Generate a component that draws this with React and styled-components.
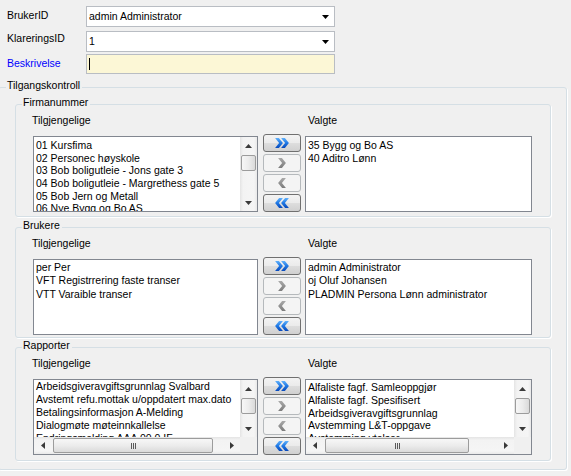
import React from 'react';
import styled, { createGlobalStyle } from 'styled-components';

const GlobalStyle = createGlobalStyle`
  html, body { margin: 0; padding: 0; }
  body {
    background: #f0f0f0;
    font-family: "Liberation Sans", Arial, sans-serif;
    font-size: 10.5px;
    color: #000;
    overflow: hidden;
  }
  * { box-sizing: border-box; }
`;

const Window = styled.div`
  width: 571px;
  height: 476px;
  padding-top: 6px;
  overflow: hidden;
  background: #f0f0f0;
`;

const FormRow = styled.div`
  display: flex;
  height: ${p => p.$h}px;
  margin-top: ${p => p.$mt}px;
`;

const FieldLabel = styled.label`
  width: 86px;
  padding: ${p => p.$pt}px 0 0 7px;
  line-height: 13px;
  color: ${p => (p.$accent ? '#0000ff' : '#000')};
`;

const Combo = styled.div`
  width: 249px;
  display: flex;
  align-items: center;
  justify-content: space-between;
  padding: 0 5px 0 2px;
  background: ${p => (p.$note ? '#fcf7d6' : '#fff')};
  border: 1px solid #b9bdc3;
  line-height: 13px;
`;

const Caret = styled.span`
  width: 1px;
  height: 12px;
  background: #000;
`;

const OuterGroup = styled.fieldset`
  margin: 5px 4px 0 -2px;
  padding: 0 15px 8px 16px;
  border: 1px solid #d5dfe5;
  border-radius: 3px;
  box-shadow: 1px 1px 0 #fff;
  min-width: 0;
`;

const GroupTitle = styled.legend`
  margin-left: ${p => p.$ml}px;
  padding: 0 2px 4px 1px;
  line-height: 13px;
`;

const InnerGroup = styled.fieldset`
  margin: ${p => p.$mt}px 0 0 0;
  padding: 1px 18px ${p => p.$pb}px 17px;
  border: 1px solid #d5dfe5;
  border-radius: 3px;
  box-shadow: 1px 1px 0 #fff;
  min-width: 0;
`;

const TransferGrid = styled.div`
  display: grid;
  grid-template-columns: 225px minmax(0, 1fr) 227px;
  grid-template-rows: 13px 78px;
  row-gap: 7px;
`;

const ColumnLabel = styled.div`
  grid-column: ${p => p.$col};
  grid-row: 1;
  line-height: 13px;
  margin-left: ${p => p.$ml}px;
`;

const ListBox = styled.div`
  grid-column: ${p => p.$col};
  grid-row: 2;
  margin-top: 2px;
  border: 1px solid #828790;
  background: #fff;
  display: grid;
  grid-template-columns: minmax(0, 1fr) auto;
  grid-template-rows: minmax(0, 1fr) auto;
  overflow: hidden;
  min-height: 0;
`;

const Items = styled.div`
  grid-area: 1 / 1;
  padding: ${p => p.$pt}px 0 0 2px;
  overflow: hidden;
  min-width: 0;
  min-height: 0;
`;

const Item = styled.div`
  line-height: ${p => p.$lh}px;
  white-space: nowrap;
`;

const VScroll = styled.div`
  grid-area: 1 / 2;
  width: 17px;
  display: flex;
  flex-direction: column;
  background: linear-gradient(to right, #e4e4e4, #f3f3f3 18%, #f5f5f5 82%, #e9e9e9);
`;

const HScroll = styled.div`
  grid-area: 2 / 1;
  height: 17px;
  display: flex;
  background: linear-gradient(to bottom, #e4e4e4, #f3f3f3 18%, #f5f5f5 82%, #e9e9e9);
`;

const Corner = styled.div`
  grid-area: 2 / 2;
  background: #f0f0f0;
`;

const ScrollArrow = styled.div`
  flex: none;
  width: 17px;
  height: 17px;
  display: flex;
  align-items: center;
  justify-content: center;
`;

const Track = styled.div`
  flex: 1;
`;

const VThumb = styled.div`
  flex: none;
  margin: 1px 1px 0;
  height: 16px;
  border: 1px solid #9c9c9c;
  border-radius: 2px;
  background: linear-gradient(to right, #f7f7f7, #ececec 50%, #dadada);
`;

const HThumb = styled.div`
  flex: none;
  margin: 1px 0 0 ${p => p.$left}px;
  width: ${p => p.$w}px;
  height: 15px;
  border: 1px solid #9c9c9c;
  border-radius: 2px;
  background: linear-gradient(to bottom, #f7f7f7, #ececec 50%, #dadada);
  display: flex;
  align-items: center;
  justify-content: center;
`;

const Grip = styled.span`
  width: 5px;
  height: 6px;
  background: repeating-linear-gradient(to right, #5a5a5a 0 1px, transparent 1px 2px);
`;

const ButtonStack = styled.div`
  grid-column: 2;
  grid-row: 2;
  display: flex;
  flex-direction: column;
  gap: 2px;
  padding: 0 4px 0 5px;
`;

const MoveButton = styled.button`
  height: 18px;
  width: 38px;
  padding: 0;
  display: flex;
  align-items: center;
  justify-content: center;
  border: 1px solid #707070;
  border-radius: 3px;
  background: linear-gradient(to bottom, #f3f3f3 0%, #ebebeb 48%, #dddddd 52%, #d0d0d0 100%);
  &:disabled {
    border-color: #b5b9bc;
    background: #f4f4f4;
  }
`;

const ChevronSvg = styled.svg`
  display: block;
  transform: ${p => (p.$left ? 'scaleX(-1)' : 'none')};
`;

function Chevron({ double, left, disabled }) {
  const pts = ox => `${ox},0 ${ox + 3.8},0 ${ox + 7.8},5 ${ox + 3.8},10 ${ox},10 ${ox + 4},5`;
  const w = double ? 14 : 8;
  return (
    <ChevronSvg $left={left} width={w} height="10" viewBox={`0 0 ${w} 10`}>
      <defs>
        <linearGradient id="chevBlue" x1="0" y1="0" x2="0" y2="1">
          <stop offset="0" stopColor="#5fb0fb" />
          <stop offset="0.5" stopColor="#1f78e4" />
          <stop offset="1" stopColor="#0849bb" />
        </linearGradient>
        <linearGradient id="chevGray" x1="0" y1="0" x2="0" y2="1">
          <stop offset="0" stopColor="#a9a9a9" />
          <stop offset="1" stopColor="#7c7c7c" />
        </linearGradient>
      </defs>
      <polygon points={pts(0.1)} fill={disabled ? 'url(#chevGray)' : 'url(#chevBlue)'} />
      {double && <polygon points={pts(6.1)} fill="url(#chevBlue)" />}
    </ChevronSvg>
  );
}

function Tri({ dir, color = '#3a3a3a' }) {
  const shapes = {
    up: ['7', '4', '0,4 7,4 3.5,0'],
    down: ['7', '4', '0,0 7,0 3.5,4'],
    left: ['4', '7', '4,0 4,7 0,3.5'],
    right: ['4', '7', '0,0 0,7 4,3.5'],
  };
  const [w, h, p] = shapes[dir];
  return (
    <svg width={w} height={h} viewBox={`0 0 ${w} ${h}`} style={{ display: 'block' }}>
      <polygon points={p} fill={color} />
    </svg>
  );
}

function List({ col, items, lh, pt, v, h }) {
  return (
    <ListBox $col={col}>
      <Items $pt={pt}>
        {items.map(t => (
          <Item key={t} $lh={lh}>{t}</Item>
        ))}
      </Items>
      {v && (
        <VScroll>
          <ScrollArrow><Tri dir="up" /></ScrollArrow>
          <VThumb />
          <Track />
          <ScrollArrow><Tri dir="down" /></ScrollArrow>
        </VScroll>
      )}
      {h && (
        <HScroll>
          <ScrollArrow><Tri dir="left" /></ScrollArrow>
          <HThumb $left={h.left} $w={h.w}><Grip /></HThumb>
          <Track />
          <ScrollArrow><Tri dir="right" /></ScrollArrow>
        </HScroll>
      )}
      {h && v && <Corner />}
    </ListBox>
  );
}

const groups = [
  {
    title: 'Firmanummer',
    mt: 0,
    pb: 4,
    left: {
      items: [
        '01 Kursfima',
        '02 Personec høyskole',
        '03 Bob boligutleie - Jons gate 3',
        '04 Bob boligutleie - Margrethess gate 5',
        '05 Bob Jern og Metall',
        '06 Nye Bygg og Bo AS',
      ],
      lh: 12.67,
      pt: 2,
      v: true,
    },
    right: { items: ['35 Bygg og Bo AS', '40 Aditro Lønn'], lh: 12.67, pt: 2 },
  },
  {
    title: 'Brukere',
    mt: 2,
    pb: 2,
    left: {
      items: ['per Per', 'VFT Registrrering faste transer', 'VTT Varaible transer'],
      lh: 13.4,
      pt: 1,
    },
    right: {
      items: ['admin Administrator', 'oj Oluf Johansen', 'PLADMIN Persona Lønn administrator'],
      lh: 13.4,
      pt: 1,
    },
  },
  {
    title: 'Rapporter',
    mt: 1,
    pb: 5,
    left: {
      items: [
        'Arbeidsgiveravgiftsgrunnlag Svalbard',
        'Avstemt refu.mottak u/oppdatert max.dato',
        'Betalingsinformasjon A-Melding',
        'Dialogmøte møteinnkallelse',
        'Endringsmelding AAA 00 0 IF',
      ],
      lh: 13.1,
      pt: 0,
      v: true,
      h: { left: 2, w: 160 },
    },
    right: {
      items: [
        'Alfaliste fagf. Samleoppgjør',
        'Alfaliste fagf. Spesifisert',
        'Arbeidsgiveravgiftsgrunnlag',
        'Avstemming L&T-oppgave',
        'Avstemming ytelser',
      ],
      lh: 12.8,
      pt: 1,
      v: true,
      h: { left: 2, w: 144 },
    },
  },
];

function TransferGroup({ g }) {
  return (
    <InnerGroup $mt={g.mt} $pb={g.pb}>
      <GroupTitle $ml={-11}>{g.title}</GroupTitle>
      <TransferGrid>
        <ColumnLabel $col={1} $ml={-1}>Tilgjengelige</ColumnLabel>
        <ColumnLabel $col={3} $ml={3}>Valgte</ColumnLabel>
        <List col={1} {...g.left} />
        <ButtonStack>
          <MoveButton type="button"><Chevron double /></MoveButton>
          <MoveButton type="button" disabled><Chevron disabled /></MoveButton>
          <MoveButton type="button" disabled><Chevron disabled left /></MoveButton>
          <MoveButton type="button"><Chevron double left /></MoveButton>
        </ButtonStack>
        <List col={3} {...g.right} />
      </TransferGrid>
    </InnerGroup>
  );
}

export default function App() {
  return (
    <>
      <GlobalStyle />
      <Window>
        <FormRow $h={21} $mt={0}>
          <FieldLabel $pt={3}>BrukerID</FieldLabel>
          <Combo>
            <span>admin Administrator</span>
            <Tri dir="down" color="#000" />
          </Combo>
        </FormRow>
        <FormRow $h={21} $mt={4}>
          <FieldLabel $pt={1}>KlareringsID</FieldLabel>
          <Combo>
            <span>1</span>
            <Tri dir="down" color="#000" />
          </Combo>
        </FormRow>
        <FormRow $h={20} $mt={2}>
          <FieldLabel $pt={3} $accent>Beskrivelse</FieldLabel>
          <Combo $note>
            <Caret />
          </Combo>
        </FormRow>
        <OuterGroup>
          <GroupTitle $ml={-9}>Tilgangskontroll</GroupTitle>
          {groups.map(g => (
            <TransferGroup key={g.title} g={g} />
          ))}
        </OuterGroup>
      </Window>
    </>
  );
}
